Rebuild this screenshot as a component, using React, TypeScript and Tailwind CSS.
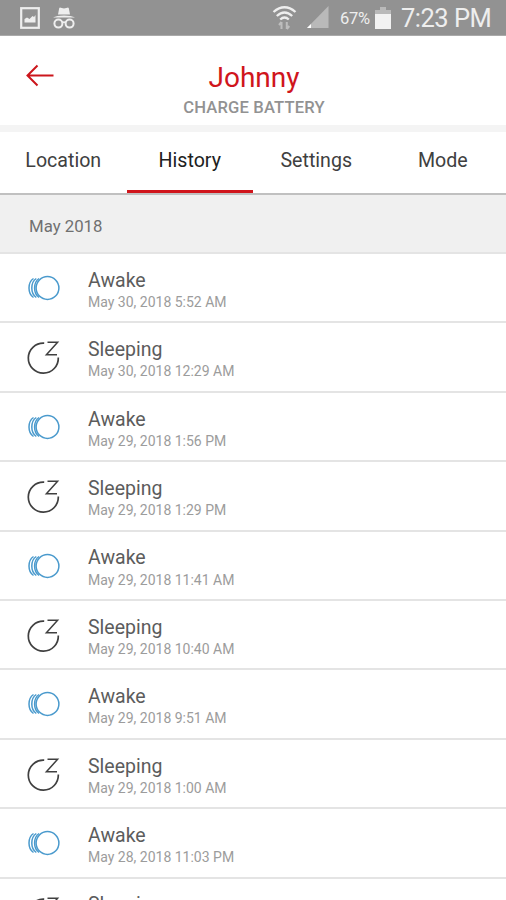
import React from 'react';

interface HistoryEntry {
  state: 'Awake' | 'Sleeping';
  date: string;
}

const tabs = ['Location', 'History', 'Settings', 'Mode'];

const entries: HistoryEntry[] = [
  { state: 'Awake', date: 'May 30, 2018 5:52 AM' },
  { state: 'Sleeping', date: 'May 30, 2018 12:29 AM' },
  { state: 'Awake', date: 'May 29, 2018 1:56 PM' },
  { state: 'Sleeping', date: 'May 29, 2018 1:29 PM' },
  { state: 'Awake', date: 'May 29, 2018 11:41 AM' },
  { state: 'Sleeping', date: 'May 29, 2018 10:40 AM' },
  { state: 'Awake', date: 'May 29, 2018 9:51 AM' },
  { state: 'Sleeping', date: 'May 29, 2018 1:00 AM' },
  { state: 'Awake', date: 'May 28, 2018 11:03 PM' },
  { state: 'Sleeping', date: '' }
];

const AwakeIcon = () => (
  <svg width="34" height="36" viewBox="0 0 34 36" fill="none" stroke="#4a9acd" strokeWidth="1.5">
    <circle cx="20.5" cy="18" r="11.4" />
    <path d="M6.5 8.5Q2 11.5 2 18t4.5 9.5" />
    <path d="M9.3 8.5Q4.8 11.5 4.8 18t4.5 9.5" />
    <path d="M12.1 8.5Q7.6 11.5 7.6 18t4.5 9.5" />
  </svg>
);

const SleepingIcon = () => (
  <svg width="34" height="36" viewBox="0 0 34 36" fill="none" stroke="#404040" strokeWidth="1.7">
    <path d="M17.2 4.2A15 15 0 1 0 31.3 18.5" />
    <path d="M20.5 3.3H30.6L19.4 15.7H30" strokeWidth="1.5" />
  </svg>
);

const StatusBar = () => (
  <div className="h-9 shrink-0 border-b border-[#aaaaaa] bg-[#929292] flex items-center justify-between pl-5 pr-[15px] text-[#eeeeee]">
    <div className="flex items-center gap-[13px]">
      <svg width="20" height="22" viewBox="0 0 20 22" fill="none">
        <rect x="1.2" y="1.2" width="17.6" height="19.6" stroke="currentColor" strokeWidth="2.2" />
        <path d="M4.5 15.5V12l2.5-1.5 2.5 1.5 3-3 1.5 1 1.5-2v7.5z" fill="currentColor" />
      </svg>
      <svg width="22" height="22" viewBox="0 0 22 22" fill="none">
        <path d="M5 7.5 6.2 1.3Q6.5.3 7.7.7l3.3.7 3.3-.7q1.2-.4 1.5.6l1.2 6.2z" fill="currentColor" />
        <path d="M0 10.6Q3.5 8.5 11 8.5t11 2.1z" fill="currentColor" />
        <circle cx="5.4" cy="16.6" r="4" stroke="currentColor" strokeWidth="2" />
        <circle cx="16.6" cy="16.6" r="4" stroke="currentColor" strokeWidth="2" />
        <path d="M9.2 15.6q1.8-1 3.6 0" stroke="currentColor" strokeWidth="1.6" />
      </svg>
    </div>
    <div className="flex items-center">
      <svg className="-mt-[2px]" width="25" height="26" viewBox="0 0 25 26" fill="none" stroke="currentColor" strokeWidth="2.3">
        <path d="M1.5 8Q12.5-1.5 23.5 8" />
        <path d="M4.8 12Q12.5 5 20.2 12" />
        <path d="M8.2 15.5Q12.5 11.5 16.8 15.5" />
        <path d="M9.5 25V18M7 21 9.5 18M14.8 18V25M17.3 22 14.8 25" stroke="#bdbdbd" strokeWidth="2" />
      </svg>
      <svg className="ml-[9px]" width="24" height="23" viewBox="0 0 24 23">
        <path d="M22.5 0V22H1z" fill="#b9b9b9" />
        <path d="M5 18V22H1z" fill="#ffffff" />
      </svg>
      <span className="ml-[10px] w-[32px] text-[16.5px] leading-none tracking-[-0.3px] whitespace-nowrap pt-[3px]">67%</span>
      <svg className="ml-[3px]" width="17" height="22" viewBox="0 0 17 22">
        <path d="M5 0h6v3h5v5H0V3h5z" fill="#b9b9b9" />
        <path d="M0 7h16v15H0z" fill="#f2f2f2" />
      </svg>
      <span className="ml-[9px] w-[90px] text-[25.5px] leading-none tracking-[-0.5px] whitespace-nowrap pt-[3px]">7:23 PM</span>
    </div>
  </div>
);

const Header = () => (
  <header className="relative h-[89px] shrink-0 flex flex-col items-center">
    <svg className="absolute left-[26px] top-[28px]" width="29" height="23" viewBox="0 0 29 23" fill="none" stroke="#cc161c" strokeWidth="2">
      <path d="M27.5 11.5H1.5M11.5 1.5l-10 10 10 10" />
    </svg>
    <h1 className="mt-[25px] pl-[2px] text-[28px] leading-[34px] text-[#d0151c]">Johnny</h1>
    <p className="mt-[3px] pl-[2px] text-[16.6px] leading-5 font-medium tracking-[0.15px] text-[#929292]">CHARGE BATTERY</p>
  </header>
);

const HistoryRow: React.FC<{ entry: HistoryEntry }> = ({ entry }) => (
  <li className="h-[69.4px] shrink-0 border-b-2 border-[#e4e4e4] flex pl-[27px]">
    <div className="mt-[16px] w-[34px] h-9">
      {entry.state === 'Awake' ? <AwakeIcon /> : <SleepingIcon />}
    </div>
    <div className="ml-[27px] pt-[14.8px]">
      <p className="text-[19.5px] leading-6 text-[#5c5c5c]">{entry.state}</p>
      <p className="-mt-[0.8px] text-[14px] leading-5 text-[#9c9c9c]">{entry.date}</p>
    </div>
  </li>
);

const App = () => (
  <div className="h-[900px] w-[506px] overflow-hidden bg-white flex flex-col font-['Roboto',sans-serif]">
    <StatusBar />
    <Header />
    <div className="h-[7px] shrink-0 bg-[#f4f4f4]" />
    <nav className="h-[63px] shrink-0 grid grid-cols-4 border-b-2 border-[#c0c0c0]">
      {tabs.map((tab) => (
        <div
          key={tab}
          className={`flex justify-center pt-[17px] text-[19.6px] leading-6 ${
            tab === 'History' ? 'border-b-[3px] border-[#d0151c] text-[#202020]' : 'text-[#404040]'
          }`}
        >
          {tab}
        </div>
      ))}
    </nav>
    <div className="h-[59px] shrink-0 bg-[#f0f0f0] border-b-2 border-[#e4e4e4] pl-[29px] pt-[18.5px] text-[16.8px] leading-6 text-[#707070]">
      May 2018
    </div>
    <ul className="flex flex-col">
      {entries.map((entry, index) => (
        <HistoryRow key={index} entry={entry} />
      ))}
    </ul>
  </div>
);

export default App;
